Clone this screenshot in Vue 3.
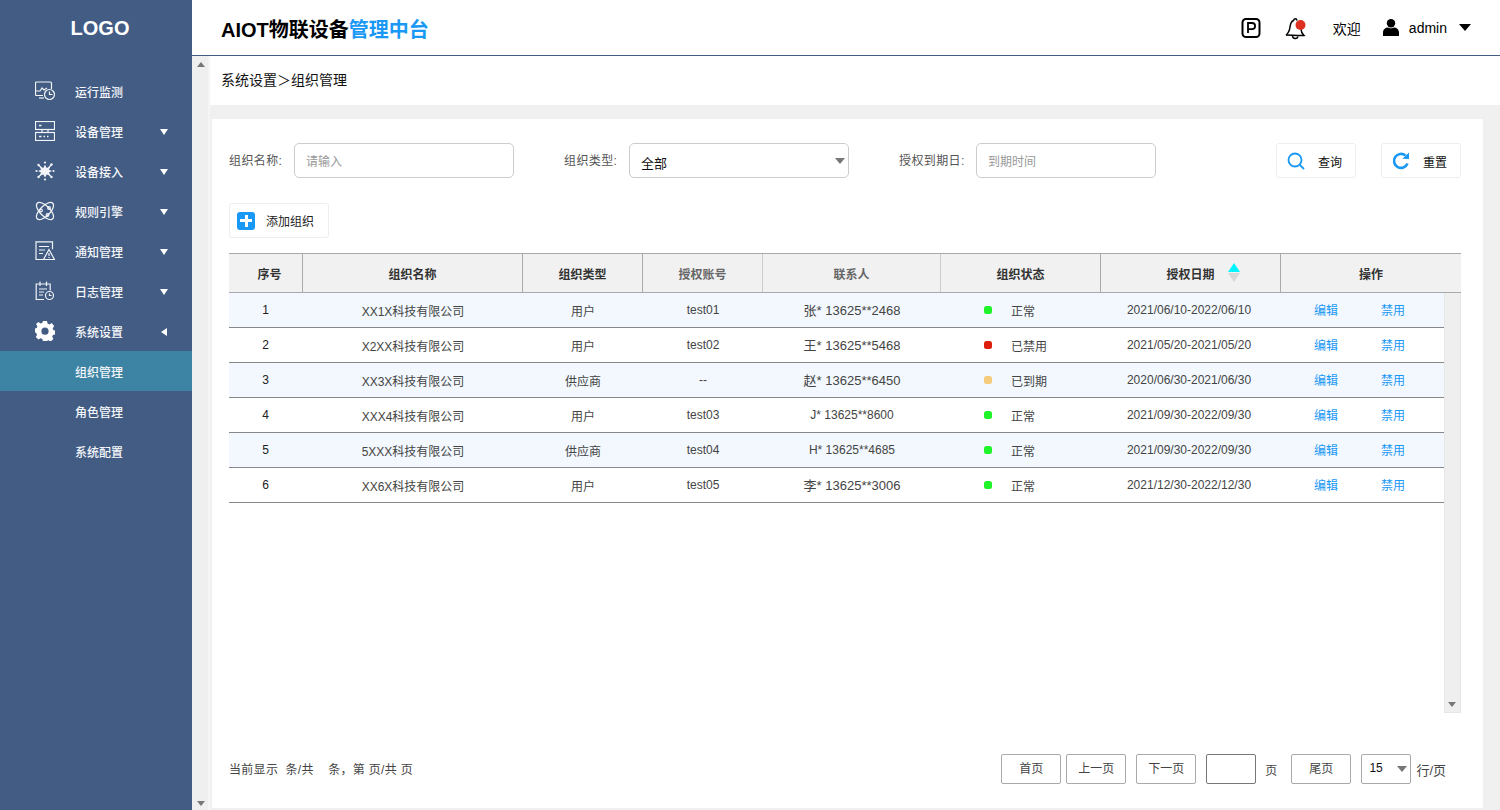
<script setup>
const nav = [
  { label: '运行监测', icon: 'monitor' },
  { label: '设备管理', icon: 'server', arrow: 'down' },
  { label: '设备接入', icon: 'hub', arrow: 'down' },
  { label: '规则引擎', icon: 'atom', arrow: 'down' },
  { label: '通知管理', icon: 'notice', arrow: 'down' },
  { label: '日志管理', icon: 'log', arrow: 'down' },
  { label: '系统设置', icon: 'gear', arrow: 'left' },
  { label: '组织管理', sub: true, active: true },
  { label: '角色管理', sub: true },
  { label: '系统配置', sub: true }
]
const columns = [
  { label: '序号', cls: 'c-index' },
  { label: '组织名称' },
  { label: '组织类型' },
  { label: '授权账号', muted: true },
  { label: '联系人', muted: true },
  { label: '组织状态' },
  { label: '授权日期', sort: true },
  { label: '操作' }
]
const rows = [
  { id: 1, name: 'XX1X科技有限公司', type: '用户', account: 'test01', contact: '张* 13625**2468', big: true, status: '正常', color: '#1ff32a', date: '2021/06/10-2022/06/10' },
  { id: 2, name: 'X2XX科技有限公司', type: '用户', account: 'test02', contact: '王* 13625**5468', big: true, status: '已禁用', color: '#dd1f0e', date: '2021/05/20-2021/05/20' },
  { id: 3, name: 'XX3X科技有限公司', type: '供应商', account: '--', contact: '赵* 13625**6450', big: true, status: '已到期', color: '#f6cb7c', date: '2020/06/30-2021/06/30' },
  { id: 4, name: 'XXX4科技有限公司', type: '用户', account: 'test03', contact: 'J* 13625**8600', status: '正常', color: '#1ff32a', date: '2021/09/30-2022/09/30' },
  { id: 5, name: '5XXX科技有限公司', type: '供应商', account: 'test04', contact: 'H* 13625**4685', status: '正常', color: '#1ff32a', date: '2021/09/30-2022/09/30' },
  { id: 6, name: 'XX6X科技有限公司', type: '用户', account: 'test05', contact: '李* 13625**3006', big: true, status: '正常', color: '#1ff32a', date: '2021/12/30-2022/12/30' }
]
</script>

<template>
  <div class="app">
    <aside class="sidebar">
      <div class="logo">LOGO</div>
      <nav class="nav">
        <div v-for="item in nav" :key="item.label" class="nav-item" :class="{ active: item.active }">
          <span class="nav-icon">
            <svg v-if="item.icon === 'monitor'" viewBox="0 0 20 20" class="ico">
              <path d="M8 14.5H1.5a1 1 0 0 1-1-1V2a1 1 0 0 1 1-1h14a1 1 0 0 1 1 1v6" />
              <path d="M1 10h4l2-3 2 2 3-2" />
              <path d="M4 17h5" />
              <circle cx="14.5" cy="13.5" r="5" />
              <path d="M14.5 10.5v3h3" />
            </svg>
            <svg v-else-if="item.icon === 'server'" viewBox="0 0 20 20" class="ico">
              <rect x="0.5" y="0.5" width="19" height="8" />
              <rect x="0.5" y="11.5" width="19" height="8" />
              <path d="M7 8.500V11.500M13 8.500V11.500" />
              <path d="M4 4.500h2.500M4 15.500h2.500M8.500 15.500h1.500M12 15.500h1.500" stroke-width="1.600" />
            </svg>
            <svg v-else-if="item.icon === 'hub'" viewBox="0 0 20 20" class="ico">
              <path class="solid" d="M10 3.800l1.700 3.100 3.500-1.500-1.200 3.300 3 1.300-3 1.500 1.200 3.100-3.500-1.200L10 16.500l-1.700-3.100-3.500 1.200 1.200-3.100-3-1.500 3-1.300-1.200-3.300 3.500 1.500z" />
              <path d="M3.500 4l3 3M16.500 3.500l-3 3.500M3.500 16l3-3M16.500 16l-3-3" />
              <circle cx="10" cy="1.500" r="1.100" class="solid" />
              <circle cx="1.500" cy="10" r="1.100" class="solid" />
              <circle cx="18.500" cy="10" r="1.100" class="solid" />
              <circle cx="10" cy="18.500" r="1.100" class="solid" />
              <circle cx="3.500" cy="4" r="1.200" class="solid" />
              <circle cx="16.500" cy="3.500" r="1.200" class="solid" />
              <circle cx="3.500" cy="16" r="1.200" class="solid" />
              <circle cx="16.500" cy="16" r="1.200" class="solid" />
            </svg>
            <svg v-else-if="item.icon === 'atom'" viewBox="0 0 20 20" class="ico">
              <ellipse cx="10" cy="10" rx="11" ry="5" transform="rotate(45 10 10)" />
              <ellipse cx="10" cy="10" rx="11" ry="5" transform="rotate(-45 10 10)" />
              <circle cx="6" cy="9.500" r="1.300" />
              <circle cx="14" cy="7" r="1.300" />
              <circle cx="12.500" cy="14" r="1.300" />
            </svg>
            <svg v-else-if="item.icon === 'notice'" viewBox="0 0 20 20" class="ico">
              <path d="M8 18.500H1V0.800h16.500v7.500" />
              <path d="M4 5.500h10M4 9h6M4 12.500h4" />
              <path d="M14 8.500l5.500 10h-11z" />
              <path d="M14 12v3M14 16v1" />
            </svg>
            <svg v-else-if="item.icon === 'log'" viewBox="0 0 20 20" class="ico">
              <path d="M9 18.500H1.200V3h14v6.500" />
              <path d="M5 0.500V5M11.500 0.500V5" />
              <path d="M4 8h8M4 11h5M4 14h4" />
              <circle cx="14.500" cy="14.500" r="4" />
              <path d="M14.500 12.500v2h2" />
            </svg>
            <svg v-else-if="item.icon === 'gear'" viewBox="0 0 20 20" class="gear">
              <path fill-rule="evenodd" d="M8 0h4l.6 2.600 1.800.8L16.700 2 19.200 5l-1.500 2.200.6 1.800 1.700.6v3.800l-2.100.6-.7 1.800 1.200 2.300-2.700 2.400-2.200-1.300-1.900.7L11 20.400H8l-.6-2.400-1.800-.7-2.200 1.300L.8 16l1.200-2.300-.7-1.800-1.300-.6V7.600l1.700-.6.7-1.800L1 3 3.400.9 5.600 2.500 7.400 1.800zM10 6.600a3.600 3.600 0 1 0 0 7.200 3.600 3.600 0 0 0 0-7.200z" />
            </svg>
          </span>
          <span class="nav-label">{{ item.label }}</span>
          <span v-if="item.arrow" class="nav-arrow" :class="item.arrow"></span>
        </div>
      </nav>
    </aside>

    <div class="right">
      <header class="header">
        <h1 class="title">AIOT物联设备<span class="title-blue">管理中台</span></h1>
        <div class="tools">
          <svg class="t-p" viewBox="0 0 20 20" width="20" height="20">
            <rect x="1.500" y="1" width="17" height="18" rx="3.500" fill="none" stroke="#000" stroke-width="2" />
            <path d="M7 15V5h4a3 3 0 0 1 0 6.200H7" fill="none" stroke="#000" stroke-width="1.800" />
          </svg>
          <span class="t-bell">
            <svg viewBox="0 0 24 24" width="24" height="24">
              <path d="M2 19c2-1.500 3.500-4 4-8 .5-3.500 2-6 3.500-6.500.8-2.500 3-2.500 3.500 0" fill="none" stroke="#000" stroke-width="1.500" />
              <path d="M2 19c5 0 13 1 18 .5-2-2-3-4-3-6.500" fill="none" stroke="#000" stroke-width="1.500" />
              <path d="M8.500 20a2.800 2.800 0 0 0 5.500.500" fill="none" stroke="#000" stroke-width="1.500" />
              <circle cx="16.500" cy="9" r="5" fill="#dd3020" />
            </svg>
          </span>
          <span class="t-welcome">欢迎</span>
          <svg class="t-user" viewBox="0 0 16 17" width="16" height="17">
            <circle cx="8" cy="4.200" r="4.200" />
            <path d="M0 17v-3.500C0 10.500 2.500 8.500 5 8.500c1 1 5 1 6 0 2.500 0 5 2 5 5V17z" />
          </svg>
          <span class="t-admin">admin</span>
          <span class="t-caret"></span>
        </div>
      </header>

      <div class="body">
        <div class="scrollbar outer">
          <span class="sb-up"></span>
          <span class="sb-down"></span>
        </div>
        <div class="content">
          <div class="crumb">系统设置＞组织管理</div>
          <section class="card">
            <div class="filters">
              <label class="f-label l1">组织名称:</label>
              <div class="field w220 ph">请输入</div>
              <label class="f-label l2">组织类型:</label>
              <div class="field w220 select">全部<span class="tri"></span></div>
              <label class="f-label l3">授权到期日:</label>
              <div class="field w180 ph p2">到期时间</div>
              <div class="f-space"></div>
              <div class="btn">
                <svg viewBox="0 0 18 18" width="18" height="18" class="btn-ico">
                  <circle cx="8" cy="8" r="6.500" fill="none" stroke="#1a98f5" stroke-width="1.800" />
                  <path d="M12.800 12.800L17 17" stroke="#1a98f5" stroke-width="1.800" fill="none" />
                </svg>
                <span class="btn-text">查询</span>
              </div>
              <div class="btn btn2">
                <svg viewBox="0 0 18 18" width="18" height="18" class="btn-ico">
                  <path d="M15.500 11.500A7 7 0 1 1 13.500 3.500" fill="none" stroke="#1a98f5" stroke-width="2.600" />
                  <path d="M10.500 6.800L17 7V.5z" fill="#1a98f5" />
                </svg>
                <span class="btn-text">重置</span>
              </div>
            </div>

            <div class="add">
              <span class="add-ico"></span>
              <span>添加组织</span>
            </div>

            <div class="table">
              <div class="thead">
                <div v-for="c in columns" :key="c.label" class="th" :class="[c.cls, { muted: c.muted }]">
                  <span>{{ c.label }}</span>
                  <span v-if="c.sort" class="sort"><i class="s-up"></i><i class="s-down"></i></span>
                </div>
              </div>
              <div class="tbody">
                <div class="rows">
                  <div v-for="(r, i) in rows" :key="r.id" class="tr" :class="{ odd: i % 2 === 0 }">
                    <div class="td num">{{ r.id }}</div>
                    <div class="td">{{ r.name }}</div>
                    <div class="td">{{ r.type }}</div>
                    <div class="td">{{ r.account }}</div>
                    <div class="td" :class="{ big: r.big }">{{ r.contact }}</div>
                    <div class="td status">
                      <i class="dot" :style="{ background: r.color }"></i>{{ r.status }}
                    </div>
                    <div class="td date">{{ r.date }}</div>
                    <div class="td ops"><a>编辑</a><a>禁用</a></div>
                  </div>
                </div>
                <div class="scrollbar inner">
                  <span class="sb-down"></span>
                </div>
              </div>
            </div>

            <footer class="pager">
              <div class="p-info">当前显示&nbsp;&nbsp;条/共&nbsp;&nbsp;&nbsp;&nbsp;条，第&nbsp;页/共&nbsp;页</div>
              <div class="p-ctrl">
                <span class="p-btn">首页</span>
                <span class="p-btn m5">上一页</span>
                <span class="p-btn m10">下一页</span>
                <span class="p-input"></span>
                <span class="p-text">页</span>
                <span class="p-btn m14">尾页</span>
                <span class="p-select">15<span class="tri"></span></span>
                <span class="p-text last">行/页</span>
              </div>
            </footer>
          </section>
        </div>
      </div>
    </div>
  </div>
</template>

<style>
html, body { margin: 0; height: 810px; overflow: hidden; }
</style>

<style scoped>
.app {
  display: flex;
  width: 1500px;
  height: 810px;
  overflow: hidden;
  background: #fff;
  color: #333;
  font-family: "Liberation Sans", "Noto Sans CJK SC", sans-serif;
  font-size: 12px;
}
.sidebar {
  width: 192px;
  flex: none;
  background: #425c84;
  color: #fff;
}
.logo {
  height: 56px;
  line-height: 56px;
  text-align: center;
  padding-left: 8px;
  font-size: 20px;
  font-weight: 700;
}
.nav { padding-top: 15px; }
.nav-item {
  position: relative;
  display: flex;
  align-items: center;
  height: 40px;
  padding-left: 35px;
}
.nav-item.active { background: #3d83a4; }
.nav-icon { width: 20px; height: 20px; margin-right: 20px; flex: none; }
.ico {
  display: block;
  width: 20px;
  height: 20px;
  fill: none;
  stroke: #f2f4f7;
  stroke-width: 1.200;
}
.ico .solid { fill: #f2f4f7; stroke: none; }
.gear { display: block; width: 20px; height: 20px; fill: #fff; }
.nav-label { font-size: 12px; font-weight: 500; color: #f4f6f9; }
.nav-arrow { position: absolute; width: 0; height: 0; }
.nav-arrow.down {
  left: 160px;
  top: 18px;
  border-left: 4px solid transparent;
  border-right: 4px solid transparent;
  border-top: 6px solid #fff;
}
.nav-arrow.left {
  left: 161px;
  top: 17px;
  border-top: 4px solid transparent;
  border-bottom: 4px solid transparent;
  border-right: 6px solid #fff;
}
.right { flex: 1; min-width: 0; display: flex; flex-direction: column; }
.header {
  height: 55px;
  flex: none;
  display: flex;
  align-items: center;
  justify-content: space-between;
  border-bottom: 1px solid #425c84;
  padding-left: 29px;
  background: #fff;
}
.title { margin: 0; padding-top: 2px; font-size: 20px; font-weight: 700; color: #000; }
.title-blue { color: #1a98f5; }
.tools { position: relative; display: flex; align-items: center; padding-right: 29px; color: #000; }
.t-p { margin-right: 23px; }
.t-bell { width: 24px; height: 24px; margin-right: 25px; }
.t-welcome { font-size: 14px; margin-right: 22px; }
.t-user { margin-right: 10px; fill: #000; }
.t-admin { font-size: 14px; margin-right: 12px; }
.t-caret {
  width: 0;
  height: 0;
  border-left: 6.500px solid transparent;
  border-right: 6.500px solid transparent;
  border-top: 7px solid #000;
}
.body { flex: 1; min-height: 0; display: flex; }
.scrollbar { position: relative; background: #efefef; flex: none; }
.scrollbar.outer { width: 16px; border-right: 2px solid #f5f5f5; }
.sb-up {
  position: absolute;
  left: 5px;
  top: 6px;
  border-left: 4px solid transparent;
  border-right: 4px solid transparent;
  border-bottom: 5px solid #777;
}
.sb-down {
  position: absolute;
  left: 5px;
  bottom: 4px;
  border-left: 4px solid transparent;
  border-right: 4px solid transparent;
  border-top: 5px solid #777;
}
.content { flex: 1; min-width: 0; display: flex; flex-direction: column; background: #f0f0f0; }
.crumb {
  height: 49px;
  flex: none;
  box-sizing: border-box;
  padding-left: 11px;
  line-height: 49px;
  font-size: 14px;
  color: #111;
  background: #fff;
}
.card {
  position: relative;
  flex: none;
  height: 689px;
  box-sizing: border-box;
  margin: 14px 17px 0 2px;
  padding: 24px 22px 0 17px;
  background: #fff;
  display: flex;
  flex-direction: column;
}
.filters { display: flex; align-items: center; height: 35px; }
.f-label { color: #555; font-size: 12px; letter-spacing: .4px; padding-bottom: 2px; }
.l1 { width: 65px; }
.l2 { width: 65px; margin-left: 50px; }
.l3 { width: 77px; margin-left: 50px; }
.field {
  box-sizing: border-box;
  height: 35px;
  line-height: 35px;
  border: 1px solid #ccc;
  border-radius: 5px;
  padding-left: 11px;
  position: relative;
}
.w220 { width: 220px; }
.w180 { width: 180px; }
.ph { color: #999; padding-top: 1px; }
.select { color: #111; font-size: 13px; padding-top: 2px; }
.tri {
  position: absolute;
  right: 3px;
  top: 50%;
  margin-top: -3px;
  border-left: 5px solid transparent;
  border-right: 5px solid transparent;
  border-top: 6px solid #777;
}
.f-space { flex: 1; }
.btn {
  box-sizing: border-box;
  width: 80px;
  height: 35px;
  display: flex;
  align-items: center;
  padding-left: 10px;
  border: 1px solid #eee;
  border-radius: 3px;
  color: #111;
}
.btn2 { margin-left: 25px; }
.btn-ico { margin-right: 13px; }
.btn-text { padding-top: 1px; }
.add {
  box-sizing: border-box;
  width: 100px;
  height: 35px;
  margin-top: 25px;
  display: flex;
  align-items: center;
  padding-left: 7px;
  border: 1px solid #eee;
  border-radius: 3px;
  color: #222;
}
.add-ico {
  position: relative;
  width: 18px;
  height: 18px;
  margin-right: 11px;
  border-radius: 3px;
  background: #1a98f5;
}
.add-ico::before, .add-ico::after { content: ""; position: absolute; background: #fff; }
.add-ico::before { left: 3px; top: 7.500px; width: 12px; height: 3px; }
.add-ico::after { left: 7.500px; top: 3px; width: 3px; height: 12px; }
.table { margin-top: 15px; }
.thead {
  display: grid;
  grid-template-columns: 74px 220px 120px 120px 178px 160px 180px 180px;
  height: 40px;
  box-sizing: border-box;
  border-top: 1px solid #aaa;
  border-bottom: 1px solid #aaa;
  background: #f1f1f1;
}
.th {
  display: flex;
  align-items: center;
  justify-content: center;
  position: relative;
  font-weight: 700;
  color: #333;
  border-right: 1px solid #aaa;
}
.th:last-child { border-right: 0; }
.th.muted { color: #666; border-right-color: #ccc; }
.c-index { padding-left: 8px; box-sizing: border-box; }
.sort { position: absolute; left: 127px; top: 9px; width: 12px; }
.sort i { display: block; width: 0; height: 0; border-left: 6px solid transparent; border-right: 6px solid transparent; }
.s-up { border-bottom: 9px solid #00f5ff; }
.s-down { border-top: 9px solid #d8d8d8; margin-top: 1px; }
.tbody { display: flex; height: 420px; }
.rows { flex: 1; min-width: 0; }
.tr {
  display: grid;
  grid-template-columns: 74px 220px 120px 120px 178px 160px 180px 163px;
  height: 35px;
  box-sizing: border-box;
  border-bottom: 1px solid #888;
}
.tr.odd { background: #f2f8fe; }
.td {
  display: flex;
  align-items: center;
  justify-content: center;
  color: #444;
}
.td.num { padding-right: 1px; box-sizing: border-box; color: #222; }
.td.big { font-size: 13px; padding-bottom: 2px; box-sizing: border-box; }
.td.date { padding-right: 4px; box-sizing: border-box; }
.status { justify-content: flex-start; padding-left: 43px; }
.dot { width: 8px; height: 8px; border-radius: 2.500px; margin-right: 19px; }
.ops { justify-content: flex-start; padding-left: 33px; padding-bottom: 1px; }
.ops a { color: #1a98f5; width: 67px; flex: none; }
.scrollbar.inner {
  width: 17px;
  height: 420px;
  box-sizing: border-box;
  border-left: 1px solid #e6e6e6;
  border-right: 1px solid #e6e6e6;
  border-bottom: 1px solid #e6e6e6;
}
.inner .sb-down { left: 3px; bottom: 5px; }
.pager {
  position: absolute;
  left: 17px;
  right: 22px;
  top: 635px;
  height: 30px;
  display: flex;
  align-items: center;
  justify-content: space-between;
}
.p-info { color: #444; letter-spacing: .3px; padding-bottom: 2px; }
.p-ctrl { display: flex; align-items: center; }
.p-btn {
  box-sizing: border-box;
  width: 60px;
  height: 30px;
  line-height: 29px;
  text-align: center;
  border: 1px solid #aaa;
  border-radius: 2px;
  color: #444;
}
.m5 { margin-left: 5px; }
.m10 { margin-left: 10px; }
.m14 { margin-left: 14px; }
.p-input {
  box-sizing: border-box;
  width: 50px;
  height: 30px;
  margin-left: 10px;
  border: 1px solid #777;
  border-radius: 2px;
}
.p-text { margin-left: 9px; color: #444; }
.p-text.last { margin-left: 5px; margin-right: 15px; font-size: 13px; }
.p-select {
  position: relative;
  box-sizing: border-box;
  width: 50px;
  height: 30px;
  margin-left: 10px;
  line-height: 26px;
  padding-left: 7px;
  border: 1px solid #aaa;
  border-radius: 2px;
  color: #111;
}
</style>
